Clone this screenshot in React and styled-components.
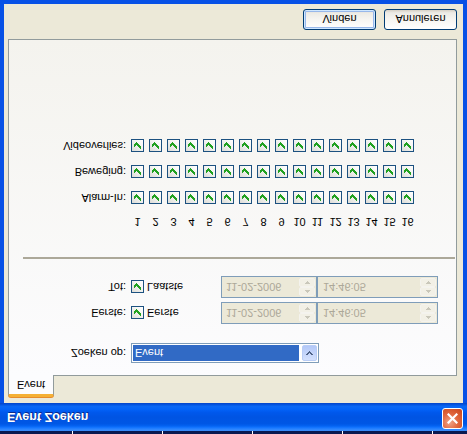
import React from "react";
import styled, { createGlobalStyle } from "styled-components";

const Global = createGlobalStyle`
  html, body { margin: 0; padding: 0; background: #fff; overflow: hidden; }
  body { font-family: "Liberation Sans", Arial, sans-serif; font-size: 11px; color: #000; }
  #root { width: 467px; height: 434px; }
`;

const Frame = styled.div`
  width: 467px;
  height: 434px;
  display: flex;
  flex-direction: column;
  transform: scaleY(-1);
  background: #ece9d8;
`;

const TopStrip = styled.div`
  flex: none;
  height: 3px;
  background-color: #0a1850;
  background-image: repeating-linear-gradient(
    to right,
    transparent 0 72px,
    #ffffff 72px 73px,
    transparent 73px 90px
  );
`;

const TitleBar = styled.div`
  flex: none;
  height: 28px;
  display: flex;
  align-items: flex-start;
  justify-content: space-between;
  padding: 0 4px 0 7px;
  background: linear-gradient(
    to bottom,
    #3a8cf8 0%,
    #2e86ff 6%,
    #1476ff 12%,
    #0463f2 18%,
    #0057e5 26%,
    #0054e3 50%,
    #0058ec 66%,
    #0363f8 78%,
    #0a68f4 88%,
    #0454e0 94%,
    #0445c8 100%
  );
`;

const Title = styled.span`
  margin-top: 7px;
  font-family: "Liberation Sans", Arial, sans-serif;
  font-weight: bold;
  font-size: 12.5px;
  line-height: 15px;
  color: #fff;
  text-shadow: 1px 1px 0 #0b2a8a;
`;

const CloseButton = styled.div`
  margin-top: 2px;
  width: 21px;
  height: 21px;
  box-sizing: border-box;
  border: 1px solid #fff;
  border-radius: 3px;
  background: radial-gradient(circle at 35% 30%, #f0a58a 0%, #e2683f 45%, #c64419 100%);
  display: flex;
  align-items: center;
  justify-content: center;
`;

const Client = styled.div`
  flex: 1;
  display: flex;
  flex-direction: column;
  border-left: 4px solid #0751e6;
  border-right: 4px solid #0751e6;
  border-bottom: 4px solid #0751e6;
  padding: 6px 6px 0 4px;
  min-height: 0;
`;

const TabStrip = styled.div`
  display: flex;
  height: 21px;
  flex: none;
`;

const Tab = styled.div`
  position: relative;
  z-index: 1;
  width: 46px;
  height: 22px;
  box-sizing: border-box;
  border: 1px solid #919b9c;
  border-bottom: none;
  border-top: 3px solid #f5b035;
  border-radius: 3px 3px 0 0;
  background: #fcfcfe;
  display: flex;
  align-items: center;
  justify-content: center;
  padding-bottom: 2px;
  box-shadow: 0 -1px 0 #e68b2c;
`;

const Panel = styled.div`
  height: 337px;
  box-sizing: border-box;
  border: 1px solid #919b9c;
  background: linear-gradient(to bottom, #fcfcfe, #f4f3ee);
  padding-top: 12px;
  display: flex;
  flex-direction: column;
`;

const FormRow = styled.div`
  display: grid;
  grid-template-columns: 117px auto;
  column-gap: 5px;
  align-items: center;
  margin-top: ${(p) => p.$mt || 0}px;
`;

const Label = styled.span`
  text-align: right;
  white-space: nowrap;
  line-height: 13px;
`;

const Controls = styled.div`
  display: flex;
  align-items: center;
`;

const Combo = styled.div`
  width: 188px;
  height: 20px;
  box-sizing: border-box;
  border: 1px solid #7f9db9;
  background: #fff;
  display: flex;
  align-items: center;
  padding: 1px;
  gap: 3px;
`;

const ComboValue = styled.div`
  flex: 1;
  height: 16px;
  background: #316ac5;
  color: #fff;
  line-height: 16px;
  padding-left: 2px;
`;

const ComboButton = styled.div`
  width: 15px;
  height: 16px;
  box-sizing: border-box;
  border: 1px solid #b9cdf6;
  border-radius: 2px;
  background: linear-gradient(to bottom, #d3e0fd, #b3c8f8);
  display: flex;
  align-items: center;
  justify-content: center;
`;

const CheckGroup = styled.div`
  width: 90px;
  display: flex;
  align-items: center;
  gap: 3px;
`;

const Box = styled.div`
  width: 13px;
  height: 13px;
  box-sizing: border-box;
  border: 1px solid #1c5180;
  background: linear-gradient(135deg, #dcdcd7 0%, #f5f5f3 60%, #ffffff 100%);
  display: flex;
  align-items: center;
  justify-content: center;
  flex: none;
`;

const SpinBox = styled.div`
  width: ${(p) => p.$w}px;
  height: 22px;
  box-sizing: border-box;
  border: 1px solid #7f9db9;
  background: #ece9d8;
  display: flex;
  padding: 1px;
`;

const SpinText = styled.div`
  flex: 1;
  color: #aca899;
  line-height: 18px;
  padding-left: ${(p) => p.$pl}px;
`;

const SpinButtons = styled.div`
  width: 16px;
  display: flex;
  flex-direction: column;
`;

const SpinHalf = styled.div`
  flex: 1;
  box-sizing: border-box;
  border: 1px solid #f4f3ee;
  border-radius: 2px;
  background: #f2f0e6;
  display: flex;
  align-items: center;
  justify-content: center;
`;

const Separator = styled.div`
  height: 2px;
  margin: 17px 1px 0 14px;
  background: #aca899;
`;

const MatrixRow = styled.div`
  display: grid;
  grid-template-columns: 117px repeat(16, 13px);
  column-gap: 5px;
  align-items: center;
  height: 13px;
  margin-top: ${(p) => p.$mt || 0}px;
`;

const Num = styled.span`
  text-align: center;
  line-height: 13px;
  white-space: nowrap;
`;

const ButtonRow = styled.div`
  display: flex;
  justify-content: flex-end;
  gap: 8px;
  margin-top: 9px;
`;

const Button = styled.div`
  width: 73px;
  height: 21px;
  box-sizing: border-box;
  border: 1px solid #003c74;
  border-radius: 3px;
  background: linear-gradient(to bottom, #ffffff 0%, #f6f5f1 50%, #ecebe6 85%, #d6d0c5 100%);
  display: flex;
  align-items: center;
  justify-content: center;
  box-shadow: ${(p) =>
    p.$default ? "inset 0 0 0 1px #cee7ff, inset 0 0 0 2px #98b8ea" : "none"};
`;

const checkPixels = [
  [6, 0],
  [5, 1], [6, 1],
  [0, 2], [4, 2], [5, 2], [6, 2],
  [0, 3], [1, 3], [3, 3], [4, 3], [5, 3],
  [0, 4], [1, 4], [2, 4], [3, 4], [4, 4],
  [1, 5], [2, 5], [3, 5],
  [2, 6],
];
const checkPath = checkPixels.map(([x, y]) => `M${x} ${y}h1v1h-1z`).join("");

const Check = () => (
  <svg width="7" height="7" viewBox="0 0 7 7" shapeRendering="crispEdges">
    <path d={checkPath} fill="#21a121" />
  </svg>
);

const CheckBox = () => (
  <Box>
    <Check />
  </Box>
);

const DownArrow = () => (
  <svg width="7" height="4" viewBox="0 0 7 4" shapeRendering="crispEdges">
    <path
      d="M0 0h2v1h-2zM5 0h2v1h-2zM1 1h2v1h-2zM4 1h2v1h-2zM2 2h3v1h-3zM3 3h1v1h-1z"
      fill="#4d6185"
    />
  </svg>
);

const SmallArrow = ({ up }) => (
  <svg width="5" height="3" viewBox="0 0 5 3" shapeRendering="crispEdges">
    <path
      d={up ? "M2 0h1v1h-1zM1 1h3v1h-3zM0 2h5v1h-5z" : "M0 0h5v1h-5zM1 1h3v1h-3zM2 2h1v1h-1z"}
      fill="#c9c7ba"
    />
  </svg>
);

const CloseX = () => (
  <svg width="11" height="11" viewBox="0 0 11 11">
    <path d="M1.5 1.5L9.5 9.5M9.5 1.5L1.5 9.5" stroke="#fff" strokeWidth="2.2" strokeLinecap="square" />
  </svg>
);

const Spin = ({ w, pl, value }) => (
  <SpinBox $w={w}>
    <SpinText $pl={pl}>{value}</SpinText>
    <SpinButtons>
      <SpinHalf>
        <SmallArrow up />
      </SpinHalf>
      <SpinHalf>
        <SmallArrow />
      </SpinHalf>
    </SpinButtons>
  </SpinBox>
);

const DateRow = ({ label, text, mt }) => (
  <FormRow $mt={mt}>
    <Label>{label}</Label>
    <Controls>
      <CheckGroup>
        <CheckBox />
        <span>{text}</span>
      </CheckGroup>
      <Spin w={96} pl={3} value="11-02-2006" />
      <Spin w={121} pl={4} value="14:46:05" />
    </Controls>
  </FormRow>
);

const cols = Array.from({ length: 16 }, (_, i) => i + 1);

const Matrix = ({ label, mt }) => (
  <MatrixRow $mt={mt}>
    <Label>{label}</Label>
    {cols.map((c) => (
      <CheckBox key={c} />
    ))}
  </MatrixRow>
);

export default function App() {
  return (
    <>
      <Global />
      <Frame>
        <TopStrip />
        <TitleBar>
          <Title>Event Zoeken</Title>
          <CloseButton>
            <CloseX />
          </CloseButton>
        </TitleBar>
        <Client>
          <TabStrip>
            <Tab>Event</Tab>
          </TabStrip>
          <Panel>
            <FormRow>
              <Label>Zoeken op:</Label>
              <Combo>
                <ComboValue>Event</ComboValue>
                <ComboButton>
                  <DownArrow />
                </ComboButton>
              </Combo>
            </FormRow>
            <DateRow label="Eerste:" text="Eerste" mt={19} />
            <DateRow label="Tot:" text="Laatste" mt={4} />
            <Separator />
            <MatrixRow $mt={29}>
              <span />
              {cols.map((c) => (
                <Num key={c}>{c}</Num>
              ))}
            </MatrixRow>
            <Matrix label="Alarm-In:" mt={11} />
            <Matrix label="Beweging:" mt={13} />
            <Matrix label="Videoverlies:" mt={13} />
          </Panel>
          <ButtonRow>
            <Button $default>Vinden</Button>
            <Button>Annuleren</Button>
          </ButtonRow>
        </Client>
      </Frame>
    </>
  );
}
